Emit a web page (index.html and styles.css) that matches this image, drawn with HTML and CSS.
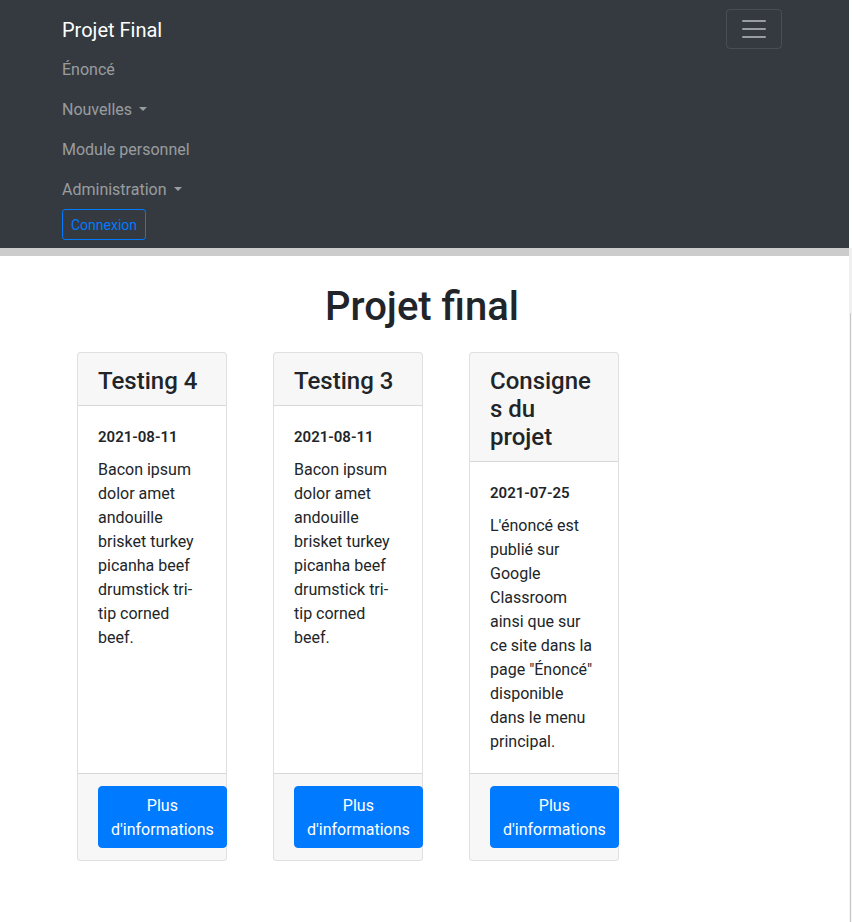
FILE: index.html
```html
<!DOCTYPE html>
<html lang="fr">
<head>
<meta charset="utf-8">
<title>Projet Final</title>
<link rel="stylesheet" href="styles.css">
</head>
<body>
<div class="layout">
  <div class="page">
    <nav class="navbar">
      <div class="nav-container">
        <div class="nav-top">
          <a class="brand" href="#">Projet Final</a>
          <button class="toggler" type="button" aria-label="Menu">
            <svg width="30" height="30" viewBox="0 0 30 30"><path stroke="rgba(255,255,255,0.5)" stroke-linecap="round" stroke-miterlimit="10" stroke-width="2" d="M4 7h22M4 15h22M4 23h22"/></svg>
          </button>
        </div>
        <ul class="nav-list">
          <li><a class="nav-link" href="#">Énoncé</a></li>
          <li><a class="nav-link dropdown" href="#">Nouvelles</a></li>
          <li><a class="nav-link" href="#">Module personnel</a></li>
          <li><a class="nav-link dropdown" href="#">Administration</a></li>
        </ul>
        <div class="nav-form">
          <button class="btn-outline" type="button">Connexion</button>
        </div>
      </div>
    </nav>
    <div class="nav-rule"></div>
    <main class="container">
      <h1 class="title">Projet final</h1>
      <div class="cards">
        <div class="card">
          <div class="card-header"><h4>Testing 4</h4></div>
          <div class="card-body">
            <div class="card-date">2021-08-11</div>
            <p class="card-text">Bacon ipsum dolor amet andouille brisket turkey picanha beef drumstick tri-tip corned beef.</p>
          </div>
          <div class="card-footer"><a class="btn-primary" href="#">Plus d'informations</a></div>
        </div>
        <div class="card">
          <div class="card-header"><h4>Testing 3</h4></div>
          <div class="card-body">
            <div class="card-date">2021-08-11</div>
            <p class="card-text">Bacon ipsum dolor amet andouille brisket turkey picanha beef drumstick tri-tip corned beef.</p>
          </div>
          <div class="card-footer"><a class="btn-primary" href="#">Plus d'informations</a></div>
        </div>
        <div class="card">
          <div class="card-header"><h4>Consignes du projet</h4></div>
          <div class="card-body">
            <div class="card-date">2021-07-25</div>
            <p class="card-text">L'énoncé est publié sur Google Classroom ainsi que sur ce site dans la page "Énoncé" disponible dans le menu principal.</p>
          </div>
          <div class="card-footer"><a class="btn-primary" href="#">Plus d'informations</a></div>
        </div>
      </div>
    </main>
  </div>
  <div class="edge">
    <div class="edge-top"></div>
    <div class="edge-mid"></div>
    <div class="edge-bottom"></div>
  </div>
</div>
</body>
</html>
```
FILE: styles.css
```css
* { box-sizing: border-box; }
html, body { margin: 0; padding: 0; }
body {
  font-family: Roboto, "Liberation Sans", sans-serif;
  font-size: 16px;
  line-height: 1.5;
  color: #212529;
  background: #fff;
}
.layout { display: flex; min-height: 922px; }
.page { width: 849px; flex: none; }
.edge { width: 3px; flex: none; display: flex; flex-direction: column; }
.edge-top { height: 248px; background: #fff; }
.edge-mid { height: 65px; background: #f0f0f0; }
.edge-bottom { flex: 1; background: linear-gradient(to right, #f4f4f4 0, #f4f4f4 1px, #c6c6c6 1px, #c6c6c6 2px, #f4f4f4 2px); }

.navbar { background: #343a40; padding: 8px 67px 8px 62px; }
.nav-container { width: 720px; }
.nav-top { display: flex; justify-content: space-between; align-items: flex-start; height: 41px; }
.brand {
  color: #fff; text-decoration: none; font-size: 20px; line-height: 30px;
  padding: 7px 0 4px; display: inline-block;
}
.toggler {
  width: 56px; height: 40px; padding: 4px 12px; margin: 1px 0 0;
  background: transparent; border: 1px solid rgba(255,255,255,0.1);
  border-radius: 4px; display: flex; align-items: center; justify-content: center;
}
.toggler svg { display: block; }
.nav-list { list-style: none; margin: 0; padding: 0; }
.nav-link {
  display: block; padding: 9px 0 7px; color: rgba(255,255,255,0.5);
  text-decoration: none; line-height: 24px;
}
.nav-link.dropdown::after {
  content: ""; display: inline-block; margin-left: 7px; vertical-align: 4px;
  border-top: 4.8px solid; border-left: 4.8px solid transparent; border-right: 4.8px solid transparent;
}
.nav-form { display: flex; }
.btn-outline {
  font-family: inherit; font-size: 14px; line-height: 21px; padding: 5px 8px 3px;
  color: #007bff; background: transparent; border: 1px solid #007bff; border-radius: 3.2px;
}
.nav-rule { height: 8px; background: #cccccc; }

.container { width: 720px; margin-left: 62px; }
.title {
  font-size: 40px; font-weight: 500; line-height: 48px; text-align: center;
  margin: 27px 0 21px;
}
.cards { display: flex; gap: 46px; padding-left: 15px; align-items: stretch; }
.card {
  width: 150px; display: flex; flex-direction: column;
  border: 1px solid rgba(0,0,0,0.125); border-radius: 4px;
  overflow-wrap: break-word; word-wrap: break-word; background: #fff;
}
.card-header {
  background: rgba(0,0,0,0.03); padding: 14px 20px 10px;
  border-bottom: 1px solid rgba(0,0,0,0.125); border-radius: 3px 3px 0 0;
}
.card-header h4 { margin: 0; font-size: 24px; font-weight: 500; line-height: 28px; }
.card-body { flex: 1; padding: 20px 20px 19px; }
.card-date { font-size: 15px; font-weight: 600; line-height: 22.5px; margin-bottom: 9px; }
.card-text { margin: 0; }
.card-footer {
  background: rgba(0,0,0,0.03); padding: 12px 20px;
  border-top: 1px solid rgba(0,0,0,0.125); border-radius: 0 0 3px 3px;
}
.btn-primary {
  display: inline-block; text-align: center; color: #fff; background: #007bff;
  border: 1px solid #007bff; border-radius: 4px; padding: 7px 12px 5px;
  line-height: 24px; text-decoration: none; overflow-wrap: normal; word-wrap: normal;
}
```
